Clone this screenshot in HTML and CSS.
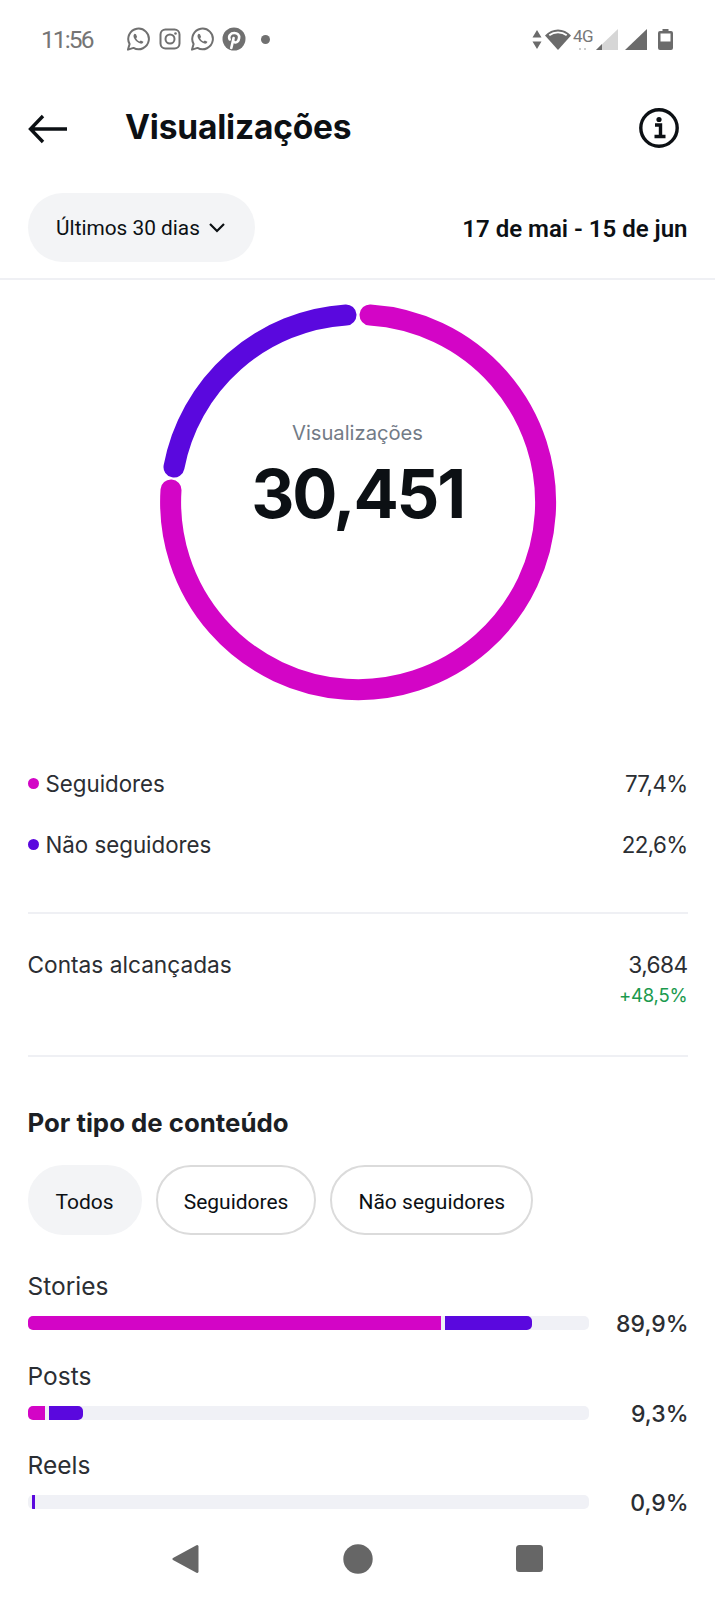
FILE: index.html
```html
<!DOCTYPE html>
<html lang="pt">
<head>
<meta charset="utf-8" />
<title>Visualizações</title>
<link rel="stylesheet" href="styles.css">
</head>
<body>
<div class="page">
  <!-- status bar -->
  <div class="status">
    <span class="time">11:56</span>
    <div class="apps">
      <svg class="wa" width="24" height="24" viewBox="0 0 24 24"><path d="M2 22.600l1.600-5.600a10.300 10.300 0 1 1 3.900 3.900z" fill="none" stroke="#707070" stroke-width="2" stroke-linejoin="round"/><path d="M8.600 6.800c-1.400 1-1.500 2.900-.2 5 1.400 2.300 3.500 4.200 6 4.800 1.500.3 2.700-.4 3-1.900l-2.600-1.300-1.200 1.200c-1.500-.6-2.900-2-3.500-3.400l1-1.200-1.100-2.700z" fill="#707070"/></svg>
      <svg class="ig" width="22" height="22" viewBox="0 0 22 22"><rect x="1.500" y="1.500" width="19" height="19" rx="5" fill="none" stroke="#707070" stroke-width="2"/><circle cx="11" cy="11" r="4.500" fill="none" stroke="#707070" stroke-width="2"/><circle cx="16.500" cy="5.500" r="1.300" fill="#707070"/></svg>
      <svg class="wa" width="24" height="24" viewBox="0 0 24 24"><path d="M2 22.600l1.600-5.600a10.300 10.300 0 1 1 3.900 3.900z" fill="none" stroke="#707070" stroke-width="2" stroke-linejoin="round"/><path d="M8.600 6.800c-1.400 1-1.500 2.900-.2 5 1.400 2.300 3.500 4.200 6 4.800 1.500.3 2.700-.4 3-1.900l-2.600-1.300-1.200 1.200c-1.500-.6-2.900-2-3.500-3.400l1-1.200-1.100-2.700z" fill="#707070"/></svg>
      <svg class="pin" width="24" height="24" viewBox="0 0 24 24"><circle cx="12" cy="12" r="11.500" fill="#707070"/><path d="M9.300 21l2.300-10M7.700 12.500c-1.700-3.500.9-6.500 4.600-6.500 3.300 0 5.200 2.200 4.800 5-.4 2.900-2 4.700-4 4.400-1.100-.2-1.800-.9-2-1.900" fill="none" stroke="#fff" stroke-width="2.600" stroke-linecap="round"/></svg>
      <i class="more"></i>
    </div>
    <div class="sys">
      <svg width="10" height="19" viewBox="0 0 10 19"><path d="M5 0l4.500 7.500h-9zM5 19L.5 11.500h9z" fill="#6b6b6b"/></svg>
      <svg class="wifi" width="26" height="21" viewBox="0 0 26 21"><path d="M0 6.500C7-1.500 19-1.500 26 6.500L13 21z" fill="#6b6b6b"/><path d="M4.300 6.300c5-3.800 12.400-3.800 17.400 0" fill="none" stroke="#fff" stroke-width="1.800"/></svg>
      <span class="net">4G<i class="net-dots"></i></span>
      <svg class="sig1" width="22" height="21" viewBox="0 0 22 21"><path d="M22 0v21H0z" fill="#d6d6d6"/><path d="M6 15v6H0z" fill="#6b6b6b"/></svg>
      <svg class="sig2" width="22" height="21" viewBox="0 0 22 21"><path d="M22 0v21H0z" fill="#6b6b6b"/></svg>
      <svg class="bat" width="15" height="21" viewBox="0 0 15 21"><path d="M4.500 0h6v2H13a2 2 0 0 1 2 2v15a2 2 0 0 1-2 2H2a2 2 0 0 1-2-2V4a2 2 0 0 1 2-2h2.500z" fill="#6b6b6b"/><rect x="2.500" y="4.500" width="10" height="8" fill="#fff"/></svg>
    </div>
  </div>

  <!-- header -->
  <div class="header">
    <svg class="back" width="40" height="30" viewBox="0 0 40 30"><path d="M39 15H3M15 2L2.500 15 15 28" fill="none" stroke="#0c1014" stroke-width="3.400"/></svg>
    <h1 class="title">Visualizações</h1>
    <svg class="info" width="40" height="40" viewBox="0 0 40 40"><circle cx="20" cy="20" r="18.200" fill="none" stroke="#0c1014" stroke-width="3.400"/><circle cx="20" cy="11.500" r="2.600" fill="#0c1014"/><path d="M16 17h5.500v11M15.500 28.500h11" fill="none" stroke="#0c1014" stroke-width="3.400"/></svg>
  </div>

  <div class="range">
    <div class="pill"><span>Últimos 30 dias</span>
      <svg width="18" height="11" viewBox="0 0 18 11"><path d="M2 2l7 7 7-7" fill="none" stroke="#0c1014" stroke-width="2.200"/></svg>
    </div>
    <span class="dates">17 de mai - 15 de jun</span>
  </div>

  <!-- donut -->
  <div class="donut">
    <svg width="400" height="400" viewBox="0 0 400 400">
      <path d="M212 13A187.500 187.500 0 1 1 13 188" fill="none" stroke="#d305c6" stroke-width="21" stroke-linecap="round"/>
      <path d="M16 165A187.500 187.500 0 0 1 188 13" fill="none" stroke="#5a08de" stroke-width="21" stroke-linecap="round"/>
    </svg>
    <div class="donut-text">
      <span class="donut-label">Visualizações</span>
      <span class="donut-num">30,451</span>
    </div>
  </div>

  <div class="legend">
    <div class="row"><span class="key"><i class="dot magenta"></i>Seguidores</span><span class="val">77,4%</span></div>
    <div class="row"><span class="key"><i class="dot purple"></i>Não seguidores</span><span class="val">22,6%</span></div>
  </div>

  <div class="reach">
    <span>Contas alcançadas</span>
    <div class="reach-val"><span class="val">3,684</span><small>+48,5%</small></div>
  </div>

  <div class="types">
    <h2>Por tipo de conteúdo</h2>
    <div class="tabs">
      <span class="tab on">Todos</span>
      <span class="tab">Seguidores</span>
      <span class="tab">Não seguidores</span>
    </div>

    <div class="item">
      <div class="item-name">Stories</div>
      <div class="item-row">
        <div class="track"><b class="magenta" style="width:413px"></b><b class="purple end" style="width:87px"></b></div>
        <span class="pct">89,9%</span>
      </div>
    </div>
    <div class="item">
      <div class="item-name">Posts</div>
      <div class="item-row">
        <div class="track"><b class="magenta" style="width:17px"></b><b class="purple end" style="width:34px"></b></div>
        <span class="pct">9,3%</span>
      </div>
    </div>
    <div class="item">
      <div class="item-name">Reels</div>
      <div class="item-row">
        <div class="track"><b class="nil"></b><b class="purple" style="width:3px"></b></div>
        <span class="pct">0,9%</span>
      </div>
    </div>
  </div>

  <!-- android nav -->
  <div class="nav">
    <svg width="28" height="30" viewBox="0 0 28 30"><path d="M25 1.500L2 14a1.200 1.200 0 0 0 0 2l23 12.500a1.500 1.500 0 0 0 2.500-1.500V3a1.500 1.500 0 0 0-2.500-1.500z" fill="#666"/></svg>
    <svg width="30" height="30" viewBox="0 0 30 30"><circle cx="15" cy="15" r="14.700" fill="#666"/></svg>
    <svg width="27" height="27" viewBox="0 0 27 27"><rect width="27" height="27" rx="3.500" fill="#666"/></svg>
  </div>
</div>
</body>
</html>
```

FILE: styles.css
```css
*{ padding:0; margin:0; box-sizing:border-box; }
body{ background:#fff; color:#0c1014; font-family:Inter,"Liberation Sans",sans-serif; }
i,b{ display:block; }
.page{ width:715px; height:1600px; overflow:hidden; }

/* status bar */
.status{ height:78px; display:flex; align-items:center; padding-left:41px; color:#757575; }
.time{ font:400 24.500px Roboto,sans-serif; letter-spacing:-1.900px; width:85px; }
.apps{ display:flex; align-items:center; gap:8px; width:407px; }
.apps .ig{ margin:0 1px; }
.more{ width:9px; height:9px; border-radius:50%; background:#707070; margin-left:7px; }
.sys{ display:flex; align-items:center; margin-left:-1px; }
.wifi{ margin-left:3px; }
.net{ font:400 17px Roboto,sans-serif; width:23px; margin:-6px 0 0 2px; position:relative; color:#777; letter-spacing:-.5px; }
.net-dots{ position:absolute; left:6px; bottom:-4px; width:7px; height:2px; border-left:2px solid #ccc; border-right:2px solid #ccc; }
.sig1{ margin-left:0; }
.sig2{ margin-left:7px; }
.bat{ margin-left:11px; }

/* header */
.header{ height:98px; display:flex; align-items:center; padding:0 36px 0 28px; }
.back{ margin-top:3px; }
.title{ font-size:33.500px; font-weight:700; flex:1; margin-left:57px; letter-spacing:-.2px; }
.info{ margin-top:1px; }

.range{ height:104px; padding:17px 27.500px 0; border-bottom:2px solid #eff0f4; display:flex; justify-content:space-between; }
.pill{ width:227px; height:69px; border-radius:35px; background:#f3f4f6; display:flex; align-items:center; justify-content:center; gap:8px; font:450 20.800px Roboto,sans-serif; }
.pill span{ padding-top:1px; }
.dates{ font:600 24px/72px Roboto,sans-serif; }

/* donut */
.donut{ width:400px; height:400px; margin:22px auto 51px; display:grid; }
.donut svg{ grid-area:1/1; }
.donut-text{ grid-area:1/1; display:flex; flex-direction:column; align-items:center; padding-top:116px; }
.donut-label{ font-size:20.200px; line-height:30px; color:#737b87; }
.donut-num{ font-size:67px; font-weight:700; line-height:84px; margin-top:4px; letter-spacing:-2.200px; }

.legend{ margin:0 27.500px; border-bottom:2px solid #eff0f4; padding-bottom:37px; }
.row{ height:61px; display:flex; align-items:center; justify-content:space-between; font-size:22.300px; color:#2b2e33; }
.key{ display:flex; align-items:center; gap:7px; }
.dot{ width:11px; height:11px; border-radius:50%; }
.magenta{ background:#d305c6; }
.purple{ background:#5a08de; }
.val{ letter-spacing:-.6px; }

.reach{ margin:0 27.500px; height:143px; padding-top:36px; border-bottom:2px solid #eff0f4; display:flex; justify-content:space-between; font-size:22.700px; line-height:30px; color:#2b2e33; }
.reach-val{ text-align:right; }
.reach-val small{ display:block; font-size:18.500px; letter-spacing:-.2px; color:#1b9a4e; }

.types{ padding:0 27.500px; }
.types h2{ font-size:25.800px; font-weight:700; line-height:34px; margin-top:49px; color:#1c1f24; }
.tabs{ display:flex; gap:14px; margin-top:25px; margin-bottom:36px; }
.tab{ height:70px; padding:3px 26px 0; border:2px solid #dbdbdb; border-radius:35px; display:flex; align-items:center; font:450 21px Roboto,sans-serif; }
.tab.on{ background:#f3f4f6; border-color:#f3f4f6; }

.item{ margin-bottom:30.500px; }
.item:last-child{ margin-bottom:0; }
.item-name{ font-size:24.500px; line-height:30px; color:#2b2e33; }
.item-row{ display:flex; justify-content:space-between; align-items:center; margin-top:15px; height:14px; }
.track{ width:561px; height:14px; border-radius:5px; background:#f0f1f6; display:flex; gap:4px; overflow:hidden; }
.track .end{ border-radius:0 5px 5px 0; }
.track .nil{ width:0; }
.pct{ font-size:23px; font-weight:500; color:#2b2e33; padding-top:2px; margin-right:-1px; }

/* android nav */
.nav{ display:flex; justify-content:space-between; align-items:center; width:372px; margin:34.500px 0 0 171px; height:30px; }
```
